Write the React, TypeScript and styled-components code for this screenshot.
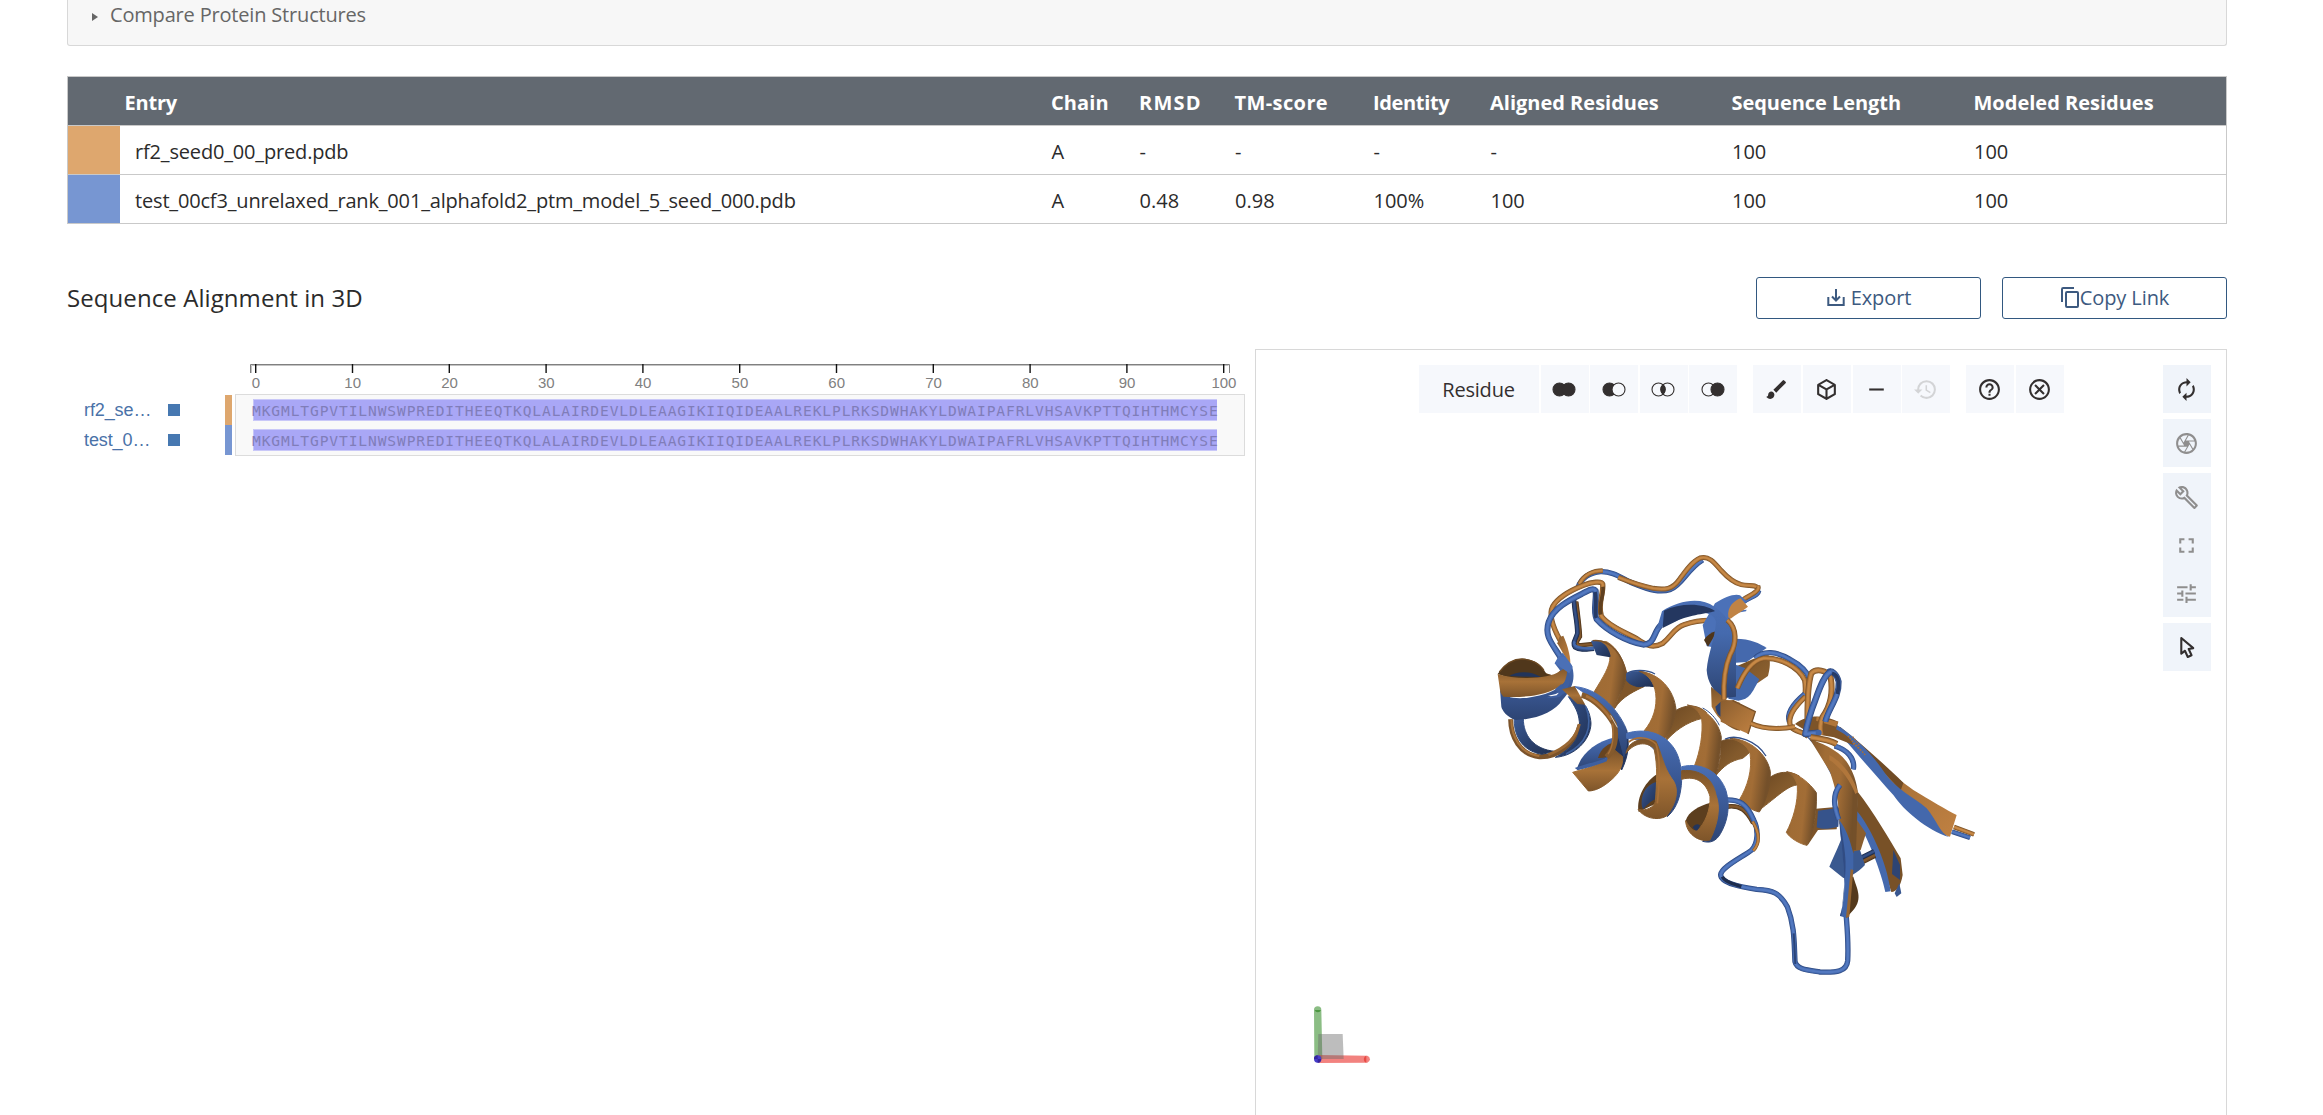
import React from 'react';
import styled, { createGlobalStyle } from 'styled-components';
import {
  MdAutorenew, MdBrush, MdFullscreen, MdHelpOutline, MdHistory,
  MdOutlineBuild, MdOutlineCamera, MdOutlineCancel, MdRemove, MdTune,
} from 'react-icons/md';

const SANS = '"Open Sans", "Noto Sans", sans-serif';

const Global = createGlobalStyle`
  * { box-sizing: border-box; }
  body { margin: 0; background: #fff; color: #2b2b2b; font: 400 20px/27px ${SANS}; overflow: hidden; }
`;

const Page = styled.main`
  height: 1115px;
  width: 2227px;
  padding-left: 67px;
  display: flex;
  flex-direction: column;
  overflow: hidden;
`;

const Accordion = styled.section`
  height: 46px;
  flex: none;
  padding: 1px 0 0 24px;
  display: flex;
  align-items: flex-start;
  gap: 12px;
  border: 1px solid #d8d8d8;
  border-top: 0;
  border-radius: 0 0 3px 3px;
  background: #f7f7f7;
  color: #666;
  letter-spacing: -0.18px;
`;
const Caret = styled.span`
  margin-top: 12px;
  border: 4px solid transparent;
  border-left: 6px solid #666;
  border-right: 0;
`;

const Table = styled.section`
  margin-top: 30px;
  flex: none;
  border: 1px solid #c9c9c9;
  border-bottom: 0;
`;
const TableRow = styled.div<{ $head?: boolean }>`
  display: grid;
  grid-template-columns: 52px 931px 88px 95.5px 138.5px 117px 241.5px 242px 1fr;
  grid-template-rows: 48px;
  height: 49px;
  border-bottom: 1px solid #c9c9c9;
  line-height: 51px;
  white-space: nowrap;
  ${p => p.$head && 'background: #626971; color: #fff; font-weight: 700;'}
`;
const Swatch = styled.span<{ $color?: string }>`background: ${p => p.$color || 'transparent'};`;
const Cell = styled.span<{ $track?: number; $pad?: number }>`
  letter-spacing: ${p => p.$track || 0}px;
  padding-left: ${p => p.$pad || 0}px;
`;

const TitleBar = styled.header`
  margin-top: 53px;
  height: 42px;
  flex: none;
  display: flex;
  align-items: center;
  gap: 21px;
`;
const Title = styled.h2`
  margin: 0;
  padding-bottom: 2px;
  flex: 1;
  font-weight: 400;
  font-size: 24px;
  letter-spacing: 0.08px;
`;
const ActionButton = styled.button<{ $gap: number }>`
  width: 225px;
  height: 42px;
  padding: 0 0 1px 1px;
  display: flex;
  align-items: center;
  justify-content: center;
  gap: ${p => p.$gap}px;
  border: 1px solid #325880;
  border-radius: 3px;
  background: #fff;
  color: #3d5a80;
  font: 400 20px/27px ${SANS};
  letter-spacing: -0.1px;
  svg { display: block; flex: none; }
`;

const Workspace = styled.div`
  margin-top: 30px;
  flex: 1;
  display: flex;
  align-items: stretch;
`;
const Alignment = styled.section`
  width: 1188px;
  padding-top: 12px;
`;
const Ruler = styled.svg`
  display: block;
  margin-left: 168px;
  text { font: 15px "Liberation Sans", Arial, sans-serif; fill: #808080; text-anchor: middle; }
`;
const Tracks = styled.div`display: flex;`;
const Labels = styled.div`
  width: 158px;
  padding: 1px 0 0 17px;
`;
const LabelRow = styled.div`
  height: 30px;
  display: flex;
  align-items: center;
`;
const Label = styled.span`
  width: 84px;
  color: #4a72a8;
  font: 18px/28px "Liberation Sans", Arial, sans-serif;
  letter-spacing: -0.1px;
`;
const Marker = styled.i`
  width: 12px;
  height: 12px;
  background: #4678b1;
`;
const Strips = styled.div`
  width: 10px;
  padding-top: 1px;
`;
const Strip = styled.div<{ $color: string }>`
  width: 7px;
  height: 30px;
  background: ${p => p.$color};
`;
const TrackBox = styled.div`
  width: 1010px;
  height: 62px;
  padding: 0 0 0 16px;
  border: 1px solid #dcdcdc;
  background: #f9f9f9;
`;
const Sequence = styled.div`
  width: 965px;
  height: 22px;
  margin-top: 4px;
  background: linear-gradient(90deg, #f9f9f9 1px, #c6c5f8 1px 2px, transparent 2px),
    linear-gradient(#c9c8f8 1px, #a9a7f6 1px 21px, #c9c8f8 21px);
  color: #807db9;
  font: 14.6px/23px "DejaVu Sans Mono", monospace;
  letter-spacing: 0.88px;
  white-space: nowrap;
  & + & { margin-top: 8px; }
`;

const Viewer = styled.section`
  position: relative;
  width: 972px;
  border: 1px solid #d8d8d8;
  border-bottom: 0;
`;
const Scene = styled.svg`display: block;`;
const Toolbar = styled.div`
  position: absolute;
  top: 15px;
  left: 163px;
  display: flex;
  gap: 16px;
`;
const ToolGroup = styled.div`
  display: flex;
  gap: 1.6px;
`;
const Tool = styled.button<{ $wide?: boolean; $faded?: boolean }>`
  width: ${p => (p.$wide ? 120 : 48)}px;
  height: 48px;
  padding: 1px 1px 0 0;
  display: flex;
  align-items: center;
  justify-content: center;
  border: 0;
  background: #f6f8fc;
  color: ${p => (p.$faded ? '#d3d4d6' : '#332f2f')};
  font: 400 20px/27px ${SANS};
  letter-spacing: -0.2px;
  svg { display: block; }
`;
const Controls = styled.div`
  position: absolute;
  top: 15px;
  right: 15px;
  display: flex;
  flex-direction: column;
  gap: 6px;
`;
const ControlGroup = styled.div`background: #f0f4fa;`;
const Control = styled.div<{ $strong?: boolean }>`
  width: 48px;
  height: 48px;
  padding: 1px 1px 0 0;
  display: flex;
  align-items: center;
  justify-content: center;
  color: ${p => (p.$strong ? '#332f2f' : '#8f8e8e')};
`;

const SEQ = 'MKGMLTGPVTILNWSWPREDITHEEQTKQLALAIRDEVLDLEAAGIKIIQIDEAALREKLPLRKSDWHAKYLDWAIPAFRLVHSAVKPTTQIHTHMCYSE';

const columns: [string, number][] = [
  ['Chain', 0.1], ['RMSD', 1.2], ['TM-score', 0.4], ['Identity', -0.35],
  ['Aligned Residues', 0], ['Sequence Length', -0.05], ['Modeled Residues', 0],
];
const entries = [
  { name: 'rf2_seed0_00_pred.pdb', short: 'rf2_se…', color: '#dea76e', values: ['A', '-', '-', '-', '-', '100', '100'] },
  { name: 'test_00cf3_unrelaxed_rank_001_alphafold2_ptm_model_5_seed_000.pdb', short: 'test_0…', color: '#7796d2', values: ['A', '0.48', '0.98', '100%', '100', '100', '100'] },
];

const ExportIcon = () => (
  <svg width="18" height="18" viewBox="0 0 18 18" fill="none" stroke="#3d5a80" strokeWidth="2">
    <path d="M1.3 8V16H16.7V8M9 0V11M5 7.5L9 11.5L13 7.5" />
  </svg>
);
const CopyIcon = () => (
  <svg width="18" height="21" viewBox="0 0 18 21" fill="none" stroke="#3d5a80" strokeWidth="2">
    <path d="M1 15V2.2Q1 1 2.2 1H13" />
    <rect x="5" y="5" width="12" height="15" rx="1" />
  </svg>
);

function SetIcon({ kind }: { kind: 'union' | 'subtract' | 'intersect' | 'set' }) {
  const left = kind === 'union' || kind === 'subtract';
  const right = kind === 'union' || kind === 'set';
  return (
    <svg width="24" height="19" viewBox="0 0 24 19" stroke="currentColor" strokeWidth="1.1">
      <circle cx="7.5" cy="9.5" r="6.5" fill={left ? 'currentColor' : 'none'} />
      <circle cx="16.5" cy="9.5" r="6.5" fill={right ? 'currentColor' : kind === 'subtract' ? '#f6f8fc' : 'none'} />
      {kind === 'intersect' && <path d="M12 4.6A6.6 6.6 0 0 1 12 14.4A6.6 6.6 0 0 1 12 4.6Z" fill="currentColor" />}
    </svg>
  );
}
const CubeIcon = () => (
  <svg width="25" height="25" viewBox="0 0 24 24" fill="currentColor">
    <path d="M21,16.5C21,16.88 20.79,17.21 20.47,17.38L12.57,21.82C12.41,21.94 12.21,22 12,22C11.79,22 11.59,21.94 11.43,21.82L3.53,17.38C3.21,17.21 3,16.88 3,16.5V7.5C3,7.12 3.21,6.79 3.53,6.62L11.43,2.18C11.59,2.06 11.79,2 12,2C12.21,2 12.41,2.06 12.57,2.18L20.47,6.62C20.79,6.79 21,7.12 21,7.5V16.5M12,4.15L6.04,7.5L12,10.85L17.96,7.5L12,4.15M5,15.91L11,19.29V12.58L5,9.21V15.91M19,15.91V9.21L13,12.58V19.29L19,15.91Z" />
  </svg>
);
const CursorIcon = () => (
  <svg width="25" height="25" viewBox="0 0 24 24" fill="currentColor">
    <path d="M10.07,14.27C10.57,14.03 11.16,14.25 11.4,14.75L13.7,19.74L15.5,18.89L13.19,13.91C12.95,13.41 13.17,12.81 13.67,12.58L13.95,12.5L16.25,12.05L8,5.12V15.9L9.82,14.43L10.07,14.27M13.64,21.97C13.14,22.21 12.54,22 12.31,21.5L10.13,16.76L7.62,18.78C7.45,18.92 7.24,19 7,19A1,1 0 0,1 6,18V3A1,1 0 0,1 7,2C7.24,2 7.47,2.09 7.64,2.23L7.65,2.22L19.14,11.86C19.57,12.22 19.62,12.85 19.27,13.27C19.12,13.45 18.91,13.57 18.7,13.61L15.54,14.23L17.74,18.96C18,19.46 17.76,20.05 17.26,20.28L13.64,21.97Z" />
  </svg>
);

/* A coil drawn as a shaded tube: dark rim, body, soft highlight. */
function Tube({ d, c, w = 16 }: { d: string; c: 'o' | 'b' | 'ob' | 'bb'; w?: number }) {
  const [rim, body, shine] = {
    o: ['#7d5427', '#a97038', '#c78946'],
    b: ['#304c85', '#4368ac', '#5379c0'],
    ob: ['#4c331a', '#6b4824', '#84592d'],
    bb: ['#1d2b49', '#2a406d', '#365187'],
  }[c];
  return (
    <g fill="none" strokeLinecap="butt" strokeLinejoin="round">
      <path d={d} stroke={rim} strokeWidth={w} />
      <path d={d} stroke={body} strokeWidth={w * 0.74} />
      <path d={d} stroke={shine} strokeWidth={w * 0.4} />
    </g>
  );
}

/* A ribbon face, slightly stroked in its own fill so that neighbours join. */
const Face = ({ d, fill }: { d: string; fill: string }) => (
  <path d={d} fill={fill} stroke={fill} strokeWidth="3" strokeLinejoin="round" />
);

const gradients: [string, number, number, string[]][] = [
  ['oV', 0, 1, ['#7c542a', '#a87238', '#7e552a']],
  ['oH', 1, 0.25, ['#80562b', '#a06c35', '#a26d36', '#74502a']],
  ['oL', 1, 1, ['#8a5d2f', '#a87138', '#c08142']],
  ['oD', 1, 1, ['#6a4722', '#835a2c', '#8f6231']],
  ['bV', 0, 1, ['#4a6fb5', '#3b5a97', '#2d4473']],
  ['bH', 1, 0, ['#4d72b7', '#3f609f', '#2f4778']],
  ['bD', 1, 1, ['#3b5a95', '#2b4270', '#1f2f50']],
  ['bT', 0, 1, ['#4a6fb5', '#456aae', '#3a5891', '#2d4473']],
];

function Protein() {
  return (
    <g transform="translate(1480 540) scale(0.33333)">
      <defs>
        {gradients.map(([id, x, y, stops]) => (
          <linearGradient key={id} id={id} x1="0" y1="0" x2={x} y2={y}>
            {stops.map((s, i) => <stop key={i} offset={i / (stops.length - 1)} stopColor={s} />)}
          </linearGradient>
        ))}
      </defs>

      {/* upper loops */}
      <Tube c="b" d="M294 142C305 112 330 98 362 95C405 94 430 120 470 134C510 150 540 158 572 148C607 135 622 87 668 60" />
      <Tube c="o" d="M298 132C312 104 340 92 368 92" w={14} />
      <Tube c="o" d="M415 112C450 126 480 137 520 145C555 151 578 147 597 120C615 95 635 65 660 54C685 46 702 66 722 90C742 112 760 128 784 134C805 139 828 132 834 145" w={15} />
      <Tube c="b" d="M838 152C836 168 812 172 792 186" w={12} />
      <Tube c="o" d="M834 138C842 154 808 166 790 178" w={14} />
      <Tube c="ob" d="M289 185C294 225 300 270 300 290C292 302 286 308 296 316L340 312" w={13} />
      <Tube c="bb" d="M282 180C282 215 292 240 292 280C286 300 276 310 285 322C300 332 320 328 342 326" w={14} />
      <path d="M284 304C278 315 285 326 342 325" fill="none" stroke="#4368ac" strokeWidth="8" />
      <Tube c="o" d="M240 300C218 260 205 225 218 200C235 170 275 150 310 136C335 126 365 122 368 132C372 160 352 190 364 228C385 256 430 275 470 296C500 318 520 325 548 310C578 286 580 265 612 254C650 241 690 240 712 242" />
      <path d="M369 140C372 165 356 190 362 224" fill="none" stroke="#5f4020" strokeWidth="11" />
      <Tube c="b" d="M244 356C218 312 192 290 206 246C220 205 265 182 305 162C325 151 340 142 347 152C350 180 338 215 350 238C380 272 440 305 490 314C525 314 520 276 542 256" w={18} />
      <path d="M345 156C352 185 341 215 349 234" stroke="#253a66" strokeWidth="11" fill="none" />
      <path d="M238 292L250 287C265 320 272 355 271 372L256 352L232 310Z" fill="url(#oL)" />

      {/* left helix */}
      <path d="M92 538C92 590 120 645 178 650C235 652 288 610 300 555" fill="none" stroke="#7b532b" strokeWidth="15" />
      <path d="M94 538C94 590 122 642 178 648" fill="none" stroke="#a9733a" strokeWidth="6" />
      <Face d="M103 532L130 536C130 585 160 628 225 634L185 643C125 632 100 585 103 532Z" fill="url(#bD)" />
      <Face d="M265 470C305 470 330 505 333 550C332 600 285 648 226 652C275 625 305 590 298 545C295 515 285 500 265 470Z" fill="url(#bD)" />
      <path d="M318 500C340 560 320 612 258 642" fill="none" stroke="#3f629f" strokeWidth="5" />
      <path d="M205 644C262 622 290 590 298 552" fill="none" stroke="#9a6834" strokeWidth="9" />
      <path d="M195 398L222 408L248 385L235 430L200 420Z" fill="#805629" />
      <path d="M53 402C75 372 100 352 140 357C175 362 188 385 200 402L230 408C200 425 110 425 53 402Z" fill="#50371b" />
      <path d="M58 396C78 370 100 357 126 357C155 358 180 372 192 392" fill="none" stroke="#6b4822" strokeWidth="4" />
      <path d="M88 408C110 392 155 392 184 412Z" fill="#22345a" />
      <path d="M60 448C72 474 100 476 140 474C195 466 235 455 258 415L224 370L248 338L275 375C288 415 278 445 247 480C225 515 170 538 108 540C80 532 66 510 64 500Z" fill="url(#bV)" />
      <path d="M53 402C110 420 205 418 240 394L261 379L261 416C235 460 150 475 70 470Q60 460 60 450Z" fill="url(#oV)" />
      <path d="M262 392C280 420 265 450 240 470C225 474 212 474 200 474C240 460 258 430 262 392Z" fill="#3e5f9f" />
      <path d="M204 465Q222 468 238 457L230 466L212 469Z" fill="#fff" />
      <path d="M224 370L236 348L256 352L278 380L268 400Z" fill="#4b70b6" />
      <path d="M225 448L244 432L262 455L242 465Z" fill="#3e5f9f" />
      <path d="M246 448L284 438L316 494L292 492Z" fill="url(#oV)" />

      {/* upper helix ribbons */}
      <Face d="M404 505C425 470 470 450 492 440L470 415L440 400C435 440 415 470 404 505Z" fill="#805629" />
      <Face d="M338 304L380 305C415 325 432 365 439 400C438 440 412 470 404 505C375 495 350 475 341 458C370 410 390 380 390 350C380 325 355 315 338 304Z" fill="url(#oH)" />
      <path d="M333 303C355 298 383 308 392 348L390 352L350 345Z" fill="url(#bD)" />
      <path d="M338 302C398 296 428 352 440 400" fill="none" stroke="#7b532a" strokeWidth="4" />
      <Face d="M440 400C468 388 500 392 525 415L522 440C500 436 490 440 474 440C456 436 446 430 440 422Z" fill="url(#bD)" />
      <Face d="M552 610C580 575 620 545 668 535L680 518C650 490 615 495 586 512C584 540 570 570 552 610Z" fill="url(#oD)" />
      <Face d="M478 394C540 400 582 450 588 508C582 550 568 580 548 606C530 604 506 584 492 573C520 540 532 500 527 460C522 425 505 405 478 394Z" fill="url(#oH)" />
      <path d="M442 400C458 388 500 388 525 402" fill="none" stroke="#34518a" strokeWidth="4" />
      <Face d="M708 706C730 680 750 662 788 655C800 645 808 640 812 632C795 598 755 590 722 604C725 640 720 672 708 706Z" fill="url(#oD)" />
      <Face d="M622 495C670 502 716 540 724 592C720 640 718 680 706 709C688 705 660 684 644 676C660 635 670 580 665 535C656 512 645 502 622 495Z" fill="url(#oH)" />
      <Face d="M838 810C860 770 866 740 870 712C892 696 925 690 958 708L955 735C925 734 890 772 838 810Z" fill="url(#oD)" />
      <Face d="M750 595C808 596 862 642 871 695C872 740 856 790 838 816C818 812 790 796 779 778C802 740 818 690 810 640C800 614 780 604 750 595Z" fill="url(#oH)" />
      <path d="M735 597C770 582 830 602 858 648" fill="none" stroke="#34518a" strokeWidth="4" />
      <path d="M668 504C690 515 708 535 718 556" fill="none" stroke="#34518a" strokeWidth="3" />
      <path d="M985 900C1005 850 1008 825 1008 806L1076 800L1070 868L1014 870L982 917Z" fill="#7d5429" />
      <path d="M1014 812L1078 803L1075 860C1050 866 1030 870 1010 862Z" fill="#36538b" />
      <Face d="M920 695C955 700 990 730 1009 758C1011 830 1001 870 981 916C960 912 930 895 919 877C938 840 955 790 952 735C945 712 935 702 920 695Z" fill="url(#oH)" />

      {/* connecting loop at the bottom */}
      <Tube c="ob" d="M740 800C780 794 800 810 820 850" w={14} />
      <Tube c="b" d="M735 780C778 778 800 790 822 842C836 870 834 910 815 930C790 950 725 980 722 1004C722 1030 790 1042 830 1048C880 1050 900 1060 922 1100C945 1160 942 1210 945 1265C950 1288 980 1290 1020 1296C1070 1298 1100 1295 1103 1262C1106 1210 1102 1170 1098 1120" />
      <Tube c="o" d="M818 845C838 878 842 908 820 932" w={10} />
      <path d="M727 1010C735 1026 760 1032 784 1040" fill="none" stroke="#1e2d4e" strokeWidth="10" />
      <path d="M941 1180C944 1220 944 1240 946 1272" fill="none" stroke="#2b4478" strokeWidth="6" />

      {/* lower helix ribbons */}
      <path d="M290 690C300 645 345 605 405 592L402 640C370 664 335 680 290 690Z" fill="url(#bV)" />
      <path d="M354 654C362 625 385 608 412 606L405 642C390 650 370 655 354 654Z" fill="#674420" />
      <Face d="M410 555L440 570C450 615 444 650 425 690L400 650Z" fill="#23355c" />
      <Face d="M278 697C320 684 375 675 404 630L428 650C430 680 415 700 398 716C370 742 345 753 325 753Z" fill="url(#oV)" />
      <path d="M284 684C320 670 360 664 385 650L380 664C350 676 320 684 294 690Z" fill="#3e5f9f" />
      <Face d="M285 440C350 445 410 500 438 565C442 600 440 625 432 650C420 610 415 570 385 530C360 495 325 465 285 440Z" fill="url(#bV)" />
      <path d="M305 465C345 476 385 520 402 552C410 590 406 625 380 652" fill="none" stroke="#855a2c" strokeWidth="17" />
      <path d="M318 468C350 482 380 515 394 540" fill="none" stroke="#a97038" strokeWidth="8" />
      <path d="M398 550C402 590 400 620 384 642" fill="none" stroke="#a97038" strokeWidth="4" />
      <path d="M392 526L412 562" stroke="#e6e6e6" strokeWidth="2.5" />

      <path d="M476 816C468 770 500 720 532 702L530 790C508 800 490 810 476 816Z" fill="#5c3e1e" />
      <path d="M486 800C480 758 505 730 532 726L528 776C508 785 498 798 490 808Z" fill="url(#bD)" />
      <Face d="M440 580C495 563 545 580 572 612C608 650 608 720 602 750C598 780 585 810 562 830C575 780 580 740 560 700C540 650 525 600 440 595Z" fill="url(#bV)" />
      <Face d="M438 640C445 600 490 590 528 604C545 640 550 680 575 715C600 745 590 790 560 828C530 845 490 832 474 808C500 815 522 800 526 785C530 730 534 680 522 625C500 605 465 605 438 640Z" fill="url(#oV)" />
      <path d="M446 606C470 588 505 590 528 612C540 650 540 720 532 790" fill="none" stroke="#a97038" strokeWidth="5" />

      <path d="M617 842C625 815 655 798 692 788C692 820 670 860 652 880C632 870 618 858 617 842Z" fill="#5c3e1e" />
      <path d="M638 862Q648 848 660 856L652 880Z" fill="#23355c" />
      <Face d="M605 680C670 665 720 700 738 752C752 800 742 845 722 880C708 905 690 910 668 904C700 880 712 820 705 770C695 720 660 695 605 692Z" fill="url(#bV)" />
      <Face d="M605 692C665 686 700 720 708 765C722 800 715 850 690 900C655 908 618 880 617 842C630 868 645 876 652 872C675 850 692 810 690 770C680 730 650 705 605 718Z" fill="url(#oV)" />

      {/* blue helix at the top right */}
      <path d="M668 255L705 190C735 170 765 160 780 166L800 184L745 240L740 330L680 318Z" fill="#4b71b8" />
      <path d="M672 300Q682 280 712 272L684 320Z" fill="#4e351a" />
      <path d="M764 212L800 209L798 214L772 218Z" fill="#4b71b8" />
      <path d="M745 232C740 200 765 180 782 175L804 200C785 215 765 225 752 236Z" fill="#c08344" />
      <path d="M767 296C810 296 840 310 860 324L800 366L768 368Z" fill="#4569ad" />
      <path d="M770 378C805 366 840 342 866 346C872 365 870 385 864 408L832 430L800 400Z" fill="url(#oD)" />
      <path d="M760 372L795 384L838 418C815 460 810 478 775 482L745 476Z" fill="#4368ab" />
      <path d="M546 214C600 178 665 172 703 200C735 220 755 250 768 300L768 470L730 475C700 455 682 425 680 390C684 340 704 300 708 245C695 205 640 215 590 242L530 268Z" fill="url(#bT)" />
      <path d="M552 212C600 188 670 188 705 213C690 220 640 222 596 240L548 264Z" fill="#243760" />
      <path d="M693 440L740 480L780 488L780 572C750 568 715 540 695 500Z" fill="url(#oV)" />
      <path d="M706 500L722 485L722 530Q710 525 706 500Z" fill="#2d4473" />
      <path d="M722 482L760 480L826 515L806 582L722 545Z" fill="url(#oL)" />
      <path d="M758 482L826 515L804 582" fill="none" stroke="#7b532a" strokeWidth="4" />
      <Tube c="o" d="M742 240C772 265 770 310 750 345C735 380 730 430 732 478" />

      {/* upper right loops */}
      <Tube c="b" d="M825 355C850 330 890 334 930 358C960 374 980 392 988 415" />
      <Tube c="o" d="M772 445C790 400 815 362 850 355C900 352 955 380 974 420C978 440 976 460 975 470" />
      <Tube c="b" d="M974 462C940 490 920 520 928 545" />
      <Tube c="o" d="M976 470C945 500 920 530 932 560C945 575 970 575 985 590" />
      <Tube c="o" d="M812 550C850 568 900 568 945 560" w={15} />

      {/* beta sheets */}
      <path d="M1070 555C1120 610 1230 700 1300 750C1350 780 1400 810 1430 825L1410 890C1370 880 1350 850 1320 800C1250 780 1200 720 1150 650C1110 610 1080 590 1060 575Z" fill="url(#oL)" />
      <path d="M1080 560C1150 615 1220 680 1270 728L1262 752C1190 670 1120 600 1068 578Z" fill="#704b25" />
      <path d="M1066 552C1120 585 1180 645 1215 700C1250 750 1300 770 1340 805C1370 840 1380 880 1408 892C1340 870 1270 810 1240 765C1190 710 1130 640 1066 566Z" fill="#4468ac" />
      <path d="M1104 588L1156 645M1112 604L1144 632M1118 590L1140 618" stroke="#a97038" strokeWidth="4" strokeDasharray="5 4" />
      <path d="M945 552C985 522 1030 525 1075 545L1068 568C1090 580 1110 590 1120 615L1062 592L990 580Z" fill="#7d5429" />
      <path d="M1010 530L1075 545L1068 560L1008 542Z" fill="#b0763b" />
      <Tube c="b" d="M1064 618C1100 628 1126 655 1120 688" />
      <path d="M980 590C1000 590 1050 640 1078 720L1075 740C1040 690 1030 640 980 590Z" fill="#3d5f9f" />
      <path d="M1133 755C1180 815 1230 900 1262 955L1268 1005C1262 1040 1250 1055 1234 1056C1215 990 1170 860 1130 830Z" fill="#785127" />
      <path d="M1240 930L1260 975L1260 1020L1236 1002Z" fill="#2d4473" />
      <path d="M1244 1060L1258 1030L1264 1060L1250 1071Z" fill="#38568f" />
      <path d="M1128 810C1165 850 1220 960 1232 1054L1216 1056C1205 1000 1160 880 1128 840Z" fill="#4569ad" />
      <Tube c="ob" d="M1140 968L1184 945" w={18} />
      <Tube c="bb" d="M1140 955L1182 934" w={14} />
      <path d="M1048 980C1070 930 1090 890 1090 870L1140 930L1155 975C1130 1000 1110 1012 1090 1014Z" fill="#3a5990" />
      <path d="M1124 830L1158 880L1142 930L1120 934Z" fill="#8a5e2f" />
      <path d="M1120 1010C1130 1045 1150 1075 1120 1110L1098 1135L1106 1010Z" fill="#54391c" />
      <path d="M1040 655C1075 720 1075 790 1078 850L1120 940L1124 830L1080 700Z" fill="#8a5e2f" />
      <path d="M988 595C1020 610 1070 625 1100 665C1120 695 1130 725 1134 760L1128 870L1120 940L1080 850C1078 790 1068 750 1050 695Z" fill="url(#oH)" />
      <path d="M1134 760L1128 930L1118 930L1118 750Z" fill="#74502a" />
      <path d="M1048 645C1085 665 1118 705 1134 757L1126 762C1110 720 1080 680 1048 660Z" fill="#b0763b" />
      <path d="M1078 840C1100 870 1110 900 1120 940L1120 984L1100 1134L1080 1128C1095 1080 1094 1030 1092 990C1088 930 1080 890 1078 840Z" fill="#4065a8" />
      <path d="M1078 840C1090 900 1100 950 1096 1000L1084 1128L1080 1128C1095 1080 1094 1030 1092 990Z" fill="#314c83" />
      <path d="M1120 990L1108 1130L1098 1134L1112 988Z" fill="#956532" />
      <Tube c="b" d="M1080 735C1056 765 1062 800 1076 838" />
      <Tube c="o" d="M982 578C984 520 978 450 994 400C1008 384 1040 390 1052 412C1060 460 1050 500 1028 530C1020 550 1020 570 1024 585" w={18} />
      <Tube c="b" d="M1036 545C1045 505 1078 475 1076 425C1070 400 1055 390 1045 396" w={18} />
      <path d="M1056 400C1080 406 1078 440 1072 462" fill="none" stroke="#253a66" strokeWidth="11" />
      <Tube c="b" d="M1054 395C1035 400 1020 440 1006 480C990 520 980 560 976 582L1016 578" w={19} />
      <circle cx="1016" cy="578" r="9" fill="#4065a8" />
      <Tube c="o" d="M992 592C1020 596 1050 600 1070 612" w={19} />
      <Tube c="b" d="M1416 875L1470 893" w={14} />
      <Tube c="o" d="M1422 861L1482 883" w={14} />
    </g>
  );
}

function Axes() {
  return (
    <g transform="translate(1240 980) scale(0.33333)">
      <path d="M222 90a11 11 0 0 1 22 0L247 237L223 237Z" fill="#449538" opacity="0.62" />
      <path d="M224 90H243A10 10 0 0 1 224 90Z" fill="#3d8d32" opacity="0.8" />
      <path d="M235 225L382 227a11 11 0 0 1 0 21L235 249Z" fill="#ea3530" opacity="0.62" />
      <path d="M379 227V248C369 246 369 230 379 227Z" fill="#e2332c" opacity="0.7" />
      <path d="M235 162L308 162L311 237L233 237Z" fill="#6d6d6d" opacity="0.45" />
      <circle cx="233" cy="237" r="11" fill="#463cc9" />
      <path d="M233 226V237H222A11 11 0 0 1 233 226ZM233 248V237H244A11 11 0 0 1 233 248Z" fill="#35259b" />
    </g>
  );
}

const ticks = [0, 10, 20, 30, 40, 50, 60, 70, 80, 90, 100];

export default function App() {
  return (
    <>
      <Global />
      <Page>
        <Accordion><Caret />Compare Protein Structures</Accordion>

        <Table>
          <TableRow $head>
            <Swatch />
            <Cell $pad={4.5} $track={-0.2}>Entry</Cell>
            {columns.map(([name, track]) => <Cell key={name} $track={track}>{name}</Cell>)}
          </TableRow>
          {entries.map(e => (
            <TableRow key={e.name}>
              <Swatch $color={e.color} />
              <Cell $pad={15} $track={-0.17}>{e.name}</Cell>
              {e.values.map((v, i) => <Cell key={i} $pad={0.5}>{v}</Cell>)}
            </TableRow>
          ))}
        </Table>

        <TitleBar>
          <Title>Sequence Alignment in 3D</Title>
          <ActionButton $gap={6}><ExportIcon />Export</ActionButton>
          <ActionButton $gap={1}><CopyIcon />Copy Link</ActionButton>
        </TitleBar>

        <Workspace>
          <Alignment>
            <Ruler width="1020" height="33" viewBox="235 361 1020 33">
              <path d="M250.5 373V364.5H1229.5V373" fill="none" stroke="#808080" />
              <path d="M251.5 373V365.5H1228.5" fill="none" stroke="#c4c4c4" />
              {ticks.map(t => (
                <g key={t}>
                  <path d={`M${255.7 + t * 9.68} 364V373`} stroke="#111" strokeWidth="1.4" />
                  <text x={255.9 + t * 9.68} y="388.3">{t}</text>
                </g>
              ))}
            </Ruler>
            <Tracks>
              <Labels>
                {entries.map(e => <LabelRow key={e.name}><Label>{e.short}</Label><Marker /></LabelRow>)}
              </Labels>
              <Strips>{entries.map(e => <Strip key={e.name} $color={e.color} />)}</Strips>
              <TrackBox>
                {entries.map(e => <Sequence key={e.name}>{SEQ}</Sequence>)}
              </TrackBox>
            </Tracks>
          </Alignment>

          <Viewer>
            <Scene width="970" height="765" viewBox="1256 350 970 765">
              <Protein />
              <Axes />
            </Scene>
            <Toolbar>
              <ToolGroup>
                <Tool $wide>Residue</Tool>
                <Tool><SetIcon kind="union" /></Tool>
                <Tool><SetIcon kind="subtract" /></Tool>
                <Tool><SetIcon kind="intersect" /></Tool>
                <Tool><SetIcon kind="set" /></Tool>
              </ToolGroup>
              <ToolGroup>
                <Tool><MdBrush size={25} /></Tool>
                <Tool><CubeIcon /></Tool>
                <Tool><MdRemove size={25} /></Tool>
                <Tool $faded><MdHistory size={25} /></Tool>
              </ToolGroup>
              <ToolGroup>
                <Tool><MdHelpOutline size={25} /></Tool>
                <Tool><MdOutlineCancel size={25} /></Tool>
              </ToolGroup>
            </Toolbar>
            <Controls>
              <ControlGroup><Control $strong><MdAutorenew size={25} /></Control></ControlGroup>
              <ControlGroup><Control><MdOutlineCamera size={25} /></Control></ControlGroup>
              <ControlGroup>
                <Control><MdOutlineBuild size={25} /></Control>
                <Control><MdFullscreen size={25} /></Control>
                <Control><MdTune size={25} /></Control>
              </ControlGroup>
              <ControlGroup><Control $strong><CursorIcon /></Control></ControlGroup>
            </Controls>
          </Viewer>
        </Workspace>
      </Page>
    </>
  );
}
